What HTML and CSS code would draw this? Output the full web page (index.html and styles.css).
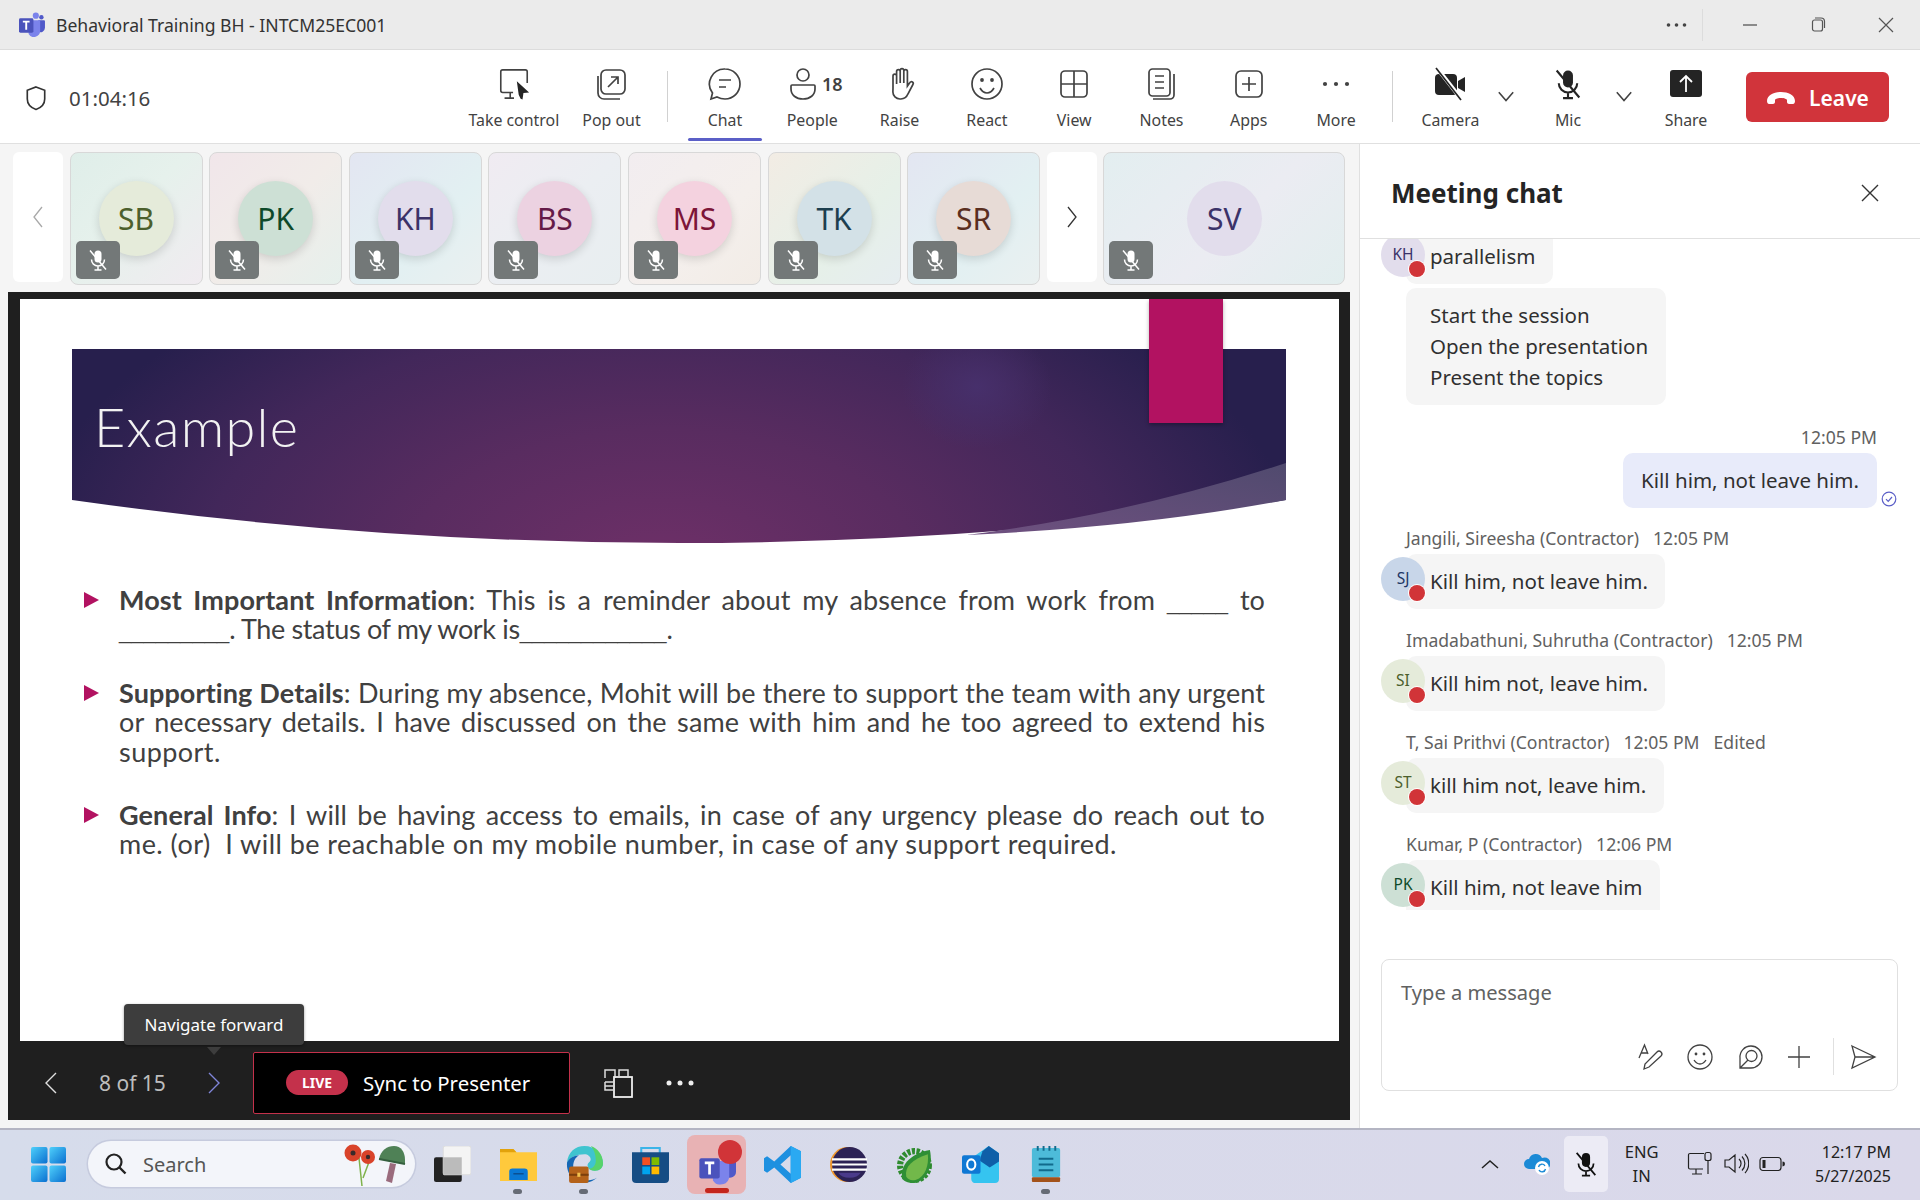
FILE: index.html
```html
<!DOCTYPE html>
<html lang="en">
<head>
    <meta charset="UTF-8">
    <title>Behavioral Training BH - INTCM25EC001</title>
    <link rel="stylesheet" href="styles.css">
</head>
<body>
<!-- Shared icons -->
<svg class="defs" width="0" height="0">
    <symbol id="mic-off" viewBox="0 0 24 24">
        <rect x="8.5" y="2.5" width="7" height="12" rx="3.5" fill="currentColor" stroke="none"/>
        <path d="M5.5 11.5a6.5 6.5 0 0 0 13 0M12 18v4M8.5 22h7M4 2.5l16 19" fill="none" stroke="currentColor" stroke-width="1.5"/>
    </symbol>
    <symbol id="teams" viewBox="0 0 28 26">
        <circle cx="18.5" cy="3.8" r="3.2" fill="#7b83eb"/>
        <circle cx="24.3" cy="5.5" r="2.3" fill="#5059c9"/>
        <path d="M21 8.5h6a1 1 0 0 1 1 1v7a4.5 4.5 0 0 1-7 3.7z" fill="#5059c9"/>
        <path d="M11 8.5h11a1 1 0 0 1 1 1v10a6.5 6.5 0 0 1-12 3.5z" fill="#7b83eb"/>
        <rect x="1" y="6.5" width="15" height="15" rx="1.5" fill="#4b53bc"/>
        <path d="M5 10h7M8.5 10v8.5" stroke="#fff" stroke-width="2" fill="none"/>
    </symbol>
</svg>

<div class="app">
    <!-- Title bar -->
    <header class="titlebar">
        <svg class="teams-logo"><use href="#teams"/></svg>
        <span class="title">Behavioral Training BH - INTCM25EC001</span>
        <div class="win-controls">
            <svg class="win-dots" viewBox="0 0 20 4"><circle cx="2" cy="2" r="1.8" fill="#444"/><circle cx="10" cy="2" r="1.8" fill="#444"/><circle cx="18" cy="2" r="1.8" fill="#444"/></svg>
            <span class="win-sep"></span>
            <svg class="win-btn" viewBox="0 0 20 20"><path d="M3 10h14" stroke="#555" stroke-width="1.3"/></svg>
            <svg class="win-btn" viewBox="0 0 20 20"><rect x="4.5" y="5" width="10" height="11" rx="2" fill="none" stroke="#555" stroke-width="1.2"/><path d="M7 3h6a3.5 3.5 0 0 1 3.5 3.5V13" fill="none" stroke="#555" stroke-width="1.2"/></svg>
            <svg class="win-btn" viewBox="0 0 20 20"><path d="M3 3l14 14M17 3L3 17" stroke="#555" stroke-width="1.2"/></svg>
        </div>
    </header>

    <!-- Meeting toolbar -->
    <nav class="toolbar">
        <div class="call-info">
            <svg class="shield" viewBox="0 0 24 28"><path d="M12 2l9.5 3.5V15c0 5.500-4 9.500-9.500 11.500C6.500 24.500 2.500 20.500 2.500 15V5.500z" fill="none" stroke="#333" stroke-width="1.8"/></svg>
            <span class="timer">01:04:16</span>
        </div>
        <div class="tools">
            <div class="tool wide">
                <svg class="tool-icon" viewBox="0 0 36 34"><path d="M17 26H6a2 2 0 0 1-2-2V4a2 2 0 0 1 2-2h24a2 2 0 0 1 2 2v12M14 26v6M8 32h10" fill="none" stroke="#424242" stroke-width="1.7"/><path d="M21 14l13 12-6 .5-1 7-2-1-2-4z" fill="#242424"/></svg>
                <span>Take control</span>
            </div>
            <div class="tool">
                <svg class="tool-icon" viewBox="0 0 34 34"><rect x="7" y="3" width="24" height="24" rx="5" fill="none" stroke="#424242" stroke-width="1.7"/><path d="M4 9v17a6 6 0 0 0 6 6h16M14 20l10-10M17 10h7v7" fill="none" stroke="#424242" stroke-width="1.7"/></svg>
                <span>Pop out</span>
            </div>
            <span class="tool-sep left-sep"></span>
            <div class="tool active">
                <svg class="tool-icon" viewBox="0 0 34 34"><path d="M17 2a15 15 0 0 1 0 30c-3 0-5.500-.7-8-2l-6 2 1.500-6A15 15 0 0 1 17 2zM11 13h12M11 20h7" fill="none" stroke="#424242" stroke-width="1.7"/></svg>
                <span>Chat</span>
            </div>
            <div class="tool">
                <div class="people-icon">
                    <svg class="tool-icon" viewBox="0 0 28 34"><circle cx="14" cy="8" r="6" fill="none" stroke="#424242" stroke-width="1.7"/><path d="M3 18h22a1 1 0 0 1 1 1v3c0 6-5 10-12 10S2 28 2 22v-3a1 1 0 0 1 1-1z" fill="none" stroke="#424242" stroke-width="1.7"/></svg>
                    <b>18</b>
                </div>
                <span>People</span>
            </div>
            <div class="tool">
                <svg class="tool-icon" viewBox="0 0 34 34"><path d="M10 21V9a1.800 1.800 0 0 1 3.600 0V4.500a1.800 1.800 0 0 1 3.600 0V3.500a1.800 1.800 0 0 1 3.600 0v1a1.800 1.800 0 0 1 3.600 0V19l2.500-3.500a1.800 1.800 0 0 1 3 2l-5 9.500a8 8 0 0 1-7 5h-1a7 7 0 0 1-7-7zM13.600 9v8M17.200 4.500V16M20.800 4.500V16" fill="none" stroke="#424242" stroke-width="1.7"/></svg>
                <span>Raise</span>
            </div>
            <div class="tool">
                <svg class="tool-icon" viewBox="0 0 34 34"><circle cx="17" cy="17" r="15" fill="none" stroke="#424242" stroke-width="1.7"/><circle cx="12" cy="13" r="1.9" fill="#424242"/><circle cx="22" cy="13" r="1.9" fill="#424242"/><path d="M10 21c2 3.500 4.500 5 7 5s5-1.500 7-5" fill="none" stroke="#424242" stroke-width="1.7"/></svg>
                <span>React</span>
            </div>
            <div class="tool">
                <svg class="tool-icon" viewBox="0 0 34 34"><rect x="4" y="4" width="26" height="26" rx="4" fill="none" stroke="#424242" stroke-width="1.7"/><path d="M17 4v26M4 17h26" stroke="#424242" stroke-width="1.7"/></svg>
                <span>View</span>
            </div>
            <div class="tool">
                <svg class="tool-icon" viewBox="0 0 34 34"><rect x="5" y="2" width="21" height="27" rx="3.5" fill="none" stroke="#424242" stroke-width="1.7"/><path d="M11 9h9M11 15h9M11 21h9M30 7v21a4 4 0 0 1-4 4H9" fill="none" stroke="#424242" stroke-width="1.7"/></svg>
                <span>Notes</span>
            </div>
            <div class="tool">
                <svg class="tool-icon" viewBox="0 0 34 34"><rect x="4" y="4" width="26" height="26" rx="5" fill="none" stroke="#424242" stroke-width="1.7"/><path d="M17 10v14M10 17h14" stroke="#424242" stroke-width="1.7"/></svg>
                <span>Apps</span>
            </div>
            <div class="tool">
                <svg class="tool-icon" viewBox="0 0 34 34"><circle cx="6" cy="17" r="2.1" fill="#424242"/><circle cx="17" cy="17" r="2.1" fill="#424242"/><circle cx="28" cy="17" r="2.1" fill="#424242"/></svg>
                <span>More</span>
            </div>
            <span class="tool-sep right-sep"></span>
            <div class="tool">
                <svg class="tool-icon" viewBox="0 0 34 34"><rect x="2" y="7" width="22" height="21" rx="4" fill="#242424"/><path d="M25 14l7-4v15l-7-4z" fill="#242424"/><path d="M4 1l25 32" stroke="#fff" stroke-width="4"/><path d="M3 1l25 32" stroke="#242424" stroke-width="1.7"/></svg>
                <span>Camera</span>
            </div>
            <svg class="caret" viewBox="0 0 16 10"><path d="M2 1l6 7 6-7" fill="none" stroke="#424242" stroke-width="1.3"/></svg>
            <div class="tool mic-tool">
                <svg class="tool-icon" viewBox="0 0 24 24"><use href="#mic-off"/></svg>
                <span>Mic</span>
            </div>
            <svg class="caret" viewBox="0 0 16 10"><path d="M2 1l6 7 6-7" fill="none" stroke="#424242" stroke-width="1.3"/></svg>
            <div class="tool share-tool">
                <svg class="tool-icon" viewBox="0 0 34 34"><rect x="1" y="3" width="32" height="27" rx="3" fill="#242424"/><path d="M17 25V9M11 15l6-6 6 6" fill="none" stroke="#fff" stroke-width="1.8"/></svg>
                <span>Share</span>
            </div>
            <button class="leave" type="button">
                <svg viewBox="0 0 30 16" class="leave-icon"><path d="M1 11c0-6 7-9 14-9s14 3 14 9c0 2-1 3-2 3h-4c-1 0-2-1-2-2v-2c0-1-3-2-6-2s-6 1-6 2v2c0 1-1 2-2 2H3c-1 0-2-1-2-3z" fill="#fff"/></svg>
                Leave
            </button>
        </div>
    </nav>

    <div class="main">
        <!-- Stage: participants and shared slide -->
        <section class="stage">
            <div class="strip">
                <div class="strip-nav prev"><svg viewBox="0 0 12 24"><path d="M10 2L2 12l8 10" fill="none" stroke="#a8a8a8" stroke-width="1.3"/></svg></div>
                <div class="tile t1"><span class="face sb">SB</span><span class="muted"><svg><use href="#mic-off"/></svg></span></div>
                <div class="tile t2"><span class="face pk">PK</span><span class="muted"><svg><use href="#mic-off"/></svg></span></div>
                <div class="tile t3"><span class="face kh">KH</span><span class="muted"><svg><use href="#mic-off"/></svg></span></div>
                <div class="tile t4"><span class="face bs">BS</span><span class="muted"><svg><use href="#mic-off"/></svg></span></div>
                <div class="tile t5"><span class="face ms">MS</span><span class="muted"><svg><use href="#mic-off"/></svg></span></div>
                <div class="tile t6"><span class="face tk">TK</span><span class="muted"><svg><use href="#mic-off"/></svg></span></div>
                <div class="tile t3"><span class="face sr">SR</span><span class="muted"><svg><use href="#mic-off"/></svg></span></div>
                <div class="strip-nav next"><svg viewBox="0 0 12 24"><path d="M2 2l8 10-8 10" fill="none" stroke="#333" stroke-width="1.3"/></svg></div>
                <div class="tile big t7"><span class="face sv">SV</span><span class="muted"><svg><use href="#mic-off"/></svg></span></div>
            </div>

            <div class="presentation">
                <div class="slide">
                    <div class="ribbon"></div>
                    <div class="banner">
                        <svg viewBox="0 0 1214 194" width="1214" height="194">
                            <defs>
                                <radialGradient id="bannerFill" gradientUnits="userSpaceOnUse" cx="590" cy="185" r="640" gradientTransform="translate(0 120) scale(1 .55)">
                                    <stop offset="0" stop-color="#6f3068"/>
                                    <stop offset=".4" stop-color="#592c60"/>
                                    <stop offset=".72" stop-color="#42275a"/>
                                    <stop offset="1" stop-color="#271f4d"/>
                                </radialGradient>
                                <radialGradient id="bannerGlow">
                                    <stop offset="0" stop-color="#47306c" stop-opacity=".95"/>
                                    <stop offset="1" stop-color="#47306c" stop-opacity="0"/>
                                </radialGradient>
                                <linearGradient id="swoosh" x1="0" y1="1" x2="1" y2="0">
                                    <stop offset="0" stop-color="#6f5080"/>
                                    <stop offset="1" stop-color="#504a6e"/>
                                </linearGradient>
                            </defs>
                            <path d="M0 0H1214V151Q607 237 0 151Z" fill="url(#bannerFill)"/>
                            <ellipse cx="905" cy="38" rx="75" ry="62" fill="url(#bannerGlow)"/>
                            <path d="M1214 114Q1060 165 895 186Q1070 178 1214 151Z" fill="url(#swoosh)"/>
                        </svg>
                        <h1 class="slide-title">Example</h1>
                    </div>
                    <div class="points">
                        <div class="point">
                            <span class="arrow"></span>
                            <div class="point-text">
                                <span class="just"><b>Most Important Information</b>: This is a reminder about my absence from work from <i class="blank">_____</i> to</span>
                                <span class="line tight"><i class="blank">_________</i>. The status of my work is<i class="blank">____________</i>.</span>
                            </div>
                        </div>
                        <div class="point">
                            <span class="arrow"></span>
                            <div class="point-text">
                                <span class="just"><b>Supporting Details</b>: During my absence, Mohit will be there to support the team with any urgent</span>
                                <span class="just">or necessary details. I have discussed on the same with him and he too agreed to extend his</span>
                                <span class="line">support.</span>
                            </div>
                        </div>
                        <div class="point">
                            <span class="arrow"></span>
                            <div class="point-text">
                                <span class="just"><b>General Info</b>: I will be having access to emails, in case of any urgency please do reach out to</span>
                                <span class="line">me. (or)&nbsp; I will be reachable on my mobile number, in case of any support required.</span>
                            </div>
                        </div>
                    </div>
                </div>
                <div class="slide-bar">
                    <div class="tooltip">Navigate forward</div>
                    <svg class="slide-chev" viewBox="0 0 14 24"><path d="M12 2L2 12l10 10" fill="none" stroke="#e0e0e0" stroke-width="1.4"/></svg>
                    <span class="page-count">8 of 15</span>
                    <svg class="slide-chev" viewBox="0 0 14 24"><path d="M2 2l10 10L2 22" fill="none" stroke="#7f85d8" stroke-width="1.4"/></svg>
                    <div class="sync">
                        <span class="live">LIVE</span>
                        <span>Sync to Presenter</span>
                    </div>
                    <svg class="thumbs" viewBox="0 0 30 30"><path d="M2 10V2h10v8M16 8V2h9v6M2 14h8M2 14v8h8M2 18h8" fill="none" stroke="#ddd" stroke-width="1.5"/><rect x="11" y="9" width="18" height="20" fill="none" stroke="#eee" stroke-width="1.8"/></svg>
                    <svg class="slide-more" viewBox="0 0 28 6"><circle cx="3" cy="3" r="2.5" fill="#eee"/><circle cx="14" cy="3" r="2.5" fill="#eee"/><circle cx="25" cy="3" r="2.5" fill="#eee"/></svg>
                </div>
            </div>
        </section>

        <!-- Meeting chat -->
        <aside class="chat">
            <div class="chat-head">
                <h2>Meeting chat</h2>
                <svg viewBox="0 0 20 20"><path d="M2 2l16 16M18 2L2 18" stroke="#333" stroke-width="1.4"/></svg>
            </div>
            <div class="messages">
                <div class="msg first">
                    <div class="bubble cut-top">
                        <span class="chat-av kh top"><i>KH</i><em class="dot"></em></span>
                        parallelism
                    </div>
                    <div class="bubble multi">Start the session<br>Open the presentation<br>Present the topics</div>
                </div>
                <div class="msg own">
                    <div class="meta">12:05 PM</div>
                    <div class="bubble mine">
                        Kill him, not leave him.
                        <svg class="seen" viewBox="0 0 16 16"><circle cx="8" cy="8" r="6.8" fill="none" stroke="#5b5fc7" stroke-width="1.2"/><path d="M5 8.200l2.200 2.200L11 6" fill="none" stroke="#5b5fc7" stroke-width="1.2"/></svg>
                    </div>
                </div>
                <div class="msg">
                    <div class="meta">Jangili, Sireesha (Contractor)<span>12:05 PM</span></div>
                    <div class="bubble"><span class="chat-av sj"><i>SJ</i><em class="dot"></em></span>Kill him, not leave him.</div>
                </div>
                <div class="msg">
                    <div class="meta">Imadabathuni, Suhrutha (Contractor)<span>12:05 PM</span></div>
                    <div class="bubble"><span class="chat-av si"><i>SI</i><em class="dot"></em></span>Kill him not, leave him.</div>
                </div>
                <div class="msg">
                    <div class="meta">T, Sai Prithvi (Contractor)<span>12:05 PM</span><span>Edited</span></div>
                    <div class="bubble"><span class="chat-av st"><i>ST</i><em class="dot"></em></span>kill him not, leave him.</div>
                </div>
                <div class="msg">
                    <div class="meta">Kumar, P (Contractor)<span>12:06 PM</span></div>
                    <div class="bubble"><span class="chat-av pk2"><i>PK</i><em class="dot"></em></span>Kill him, not leave him<br>kill him, not leave him</div>
                </div>
            </div>
            <div class="compose">
                <div class="placeholder">Type a message</div>
                <div class="compose-tools">
                    <svg viewBox="0 0 28 28"><path d="M2 15L7.500 2 11 11M4 10h6M12 24l-5 2 1-5L20 9a2.800 2.800 0 0 1 4 4z" fill="none" stroke="#424242" stroke-width="1.3"/></svg>
                    <svg viewBox="0 0 28 28"><circle cx="14" cy="14" r="12" fill="none" stroke="#424242" stroke-width="1.3"/><circle cx="10" cy="11" r="1.4" fill="#424242"/><circle cx="18" cy="11" r="1.4" fill="#424242"/><path d="M8 17c2 3 4 4 6 4s4-1 6-4" fill="none" stroke="#424242" stroke-width="1.3"/></svg>
                    <svg viewBox="0 0 28 28"><path d="M15 3a11 11 0 0 1 0 22H4V15A11 11 0 0 1 15 3zM4 25l8-8" fill="none" stroke="#424242" stroke-width="1.3"/><circle cx="15.500" cy="13" r="5.500" fill="none" stroke="#424242" stroke-width="1.3"/></svg>
                    <svg viewBox="0 0 28 28"><path d="M14 3v22M3 14h22" stroke="#424242" stroke-width="1.3"/></svg>
                    <span class="compose-sep"></span>
                    <svg viewBox="0 0 28 28"><path d="M3 3l23 11L3 25l3-11zM6 14h20" fill="none" stroke="#424242" stroke-width="1.3"/></svg>
                </div>
            </div>
        </aside>
    </div>

    <!-- Windows taskbar -->
    <footer class="taskbar">
        <svg class="start" viewBox="0 0 36 36">
            <defs><linearGradient id="winBlue" x1="0" y1="0" x2="1" y2="1"><stop offset="0" stop-color="#4fd0fb"/><stop offset="1" stop-color="#0a6fd0"/></linearGradient></defs>
            <rect width="17" height="17" x="0" y="0" rx="2" fill="url(#winBlue)"/><rect width="17" height="17" x="19" y="0" rx="2" fill="url(#winBlue)"/><rect width="17" height="17" x="0" y="19" rx="2" fill="url(#winBlue)"/><rect width="17" height="17" x="19" y="19" rx="2" fill="url(#winBlue)"/>
        </svg>
        <div class="search">
            <svg class="search-icon" viewBox="0 0 24 24"><circle cx="10" cy="10" r="7.500" fill="none" stroke="#222" stroke-width="2.2"/><path d="M15.500 15.500l6 6" stroke="#222" stroke-width="2.4"/></svg>
            <span class="search-text">Search</span>
            <svg class="poppy" viewBox="0 0 64 44">
                <path d="M17 16l3 28M27 20l-6 16" stroke="#7fb24c" stroke-width="1.5" fill="none"/>
                <circle cx="11" cy="11" r="8.500" fill="#d9432a"/><circle cx="11" cy="11" r="2.500" fill="#3a2a2a"/>
                <circle cx="26" cy="15" r="7" fill="#d9432a"/><circle cx="26" cy="15" r="2.200" fill="#3a2a2a"/>
                <path d="M37 17c2-9 8-13 15-13s11 6 11 14v4z" fill="#4f8156"/><path d="M37 17l26 5" stroke="#35603f" stroke-width="2"/>
                <path d="M48 21l-4 18 6 2 4-19z" fill="#9a6b7d"/>
            </svg>
        </div>
        <div class="apps">
            <span class="app-icon">
                <svg viewBox="0 0 36 36"><rect x="0" y="11" width="27" height="24" rx="2" fill="#222"/><rect x="9" y="0" width="27" height="28" rx="2" fill="#f4f4f4" stroke="#ddd"/><rect x="9" y="11" width="18" height="17" fill="#bbb"/></svg>
            </span>
            <span class="app-icon running">
                <svg viewBox="0 0 36 36"><path d="M0 3h13l3 3h20v28H0z" fill="#ffc93c"/><path d="M0 3h13l3 3H0z" fill="#e2a20c"/><path d="M9 33V25a3 3 0 0 1 3-3h12a3 3 0 0 1 3 3v8z" fill="#0a78d4"/><path d="M13 27h10" stroke="#0b4f92" stroke-width="1.5"/></svg>
            </span>
            <span class="app-icon running">
                <svg viewBox="0 0 36 36"><path d="M1 16C2 6 9 0 18 0c10 0 18 8 18 17 0 4-3 7-8 7-4 0-7-2-7-5 0-3 3-3 3-6 0-3-3-5-6-5C10 8 4 11 1 16z" fill="#3fc4cf"/><path d="M24 0c7 2 12 9 12 17 0 4-3 7-8 7-3 0-5-1-6-2 4 0 7-3 7-8 0-6-2-11-5-14z" fill="#58d36a"/><path d="M1 16c2-4 7-7 12-7-4 2-6 6-6 11 0 6 5 12 11 13 5 1 9 0 12-2-3 3-8 5-13 5C8 36 0 27 1 16z" fill="#1567b5"/><rect x="3" y="20" width="19" height="16" rx="2" fill="#b4621a"/><rect x="3" y="27" width="19" height="2" fill="#7c3f0c"/><rect x="11" y="26" width="3" height="4" fill="#f2c14e"/></svg>
            </span>
            <span class="app-icon">
                <svg viewBox="0 0 36 36"><path d="M9 8V2h18v6" fill="none" stroke="#3bb4e8" stroke-width="2"/><path d="M0 6h36v26a4 4 0 0 1-4 4H4a4 4 0 0 1-4-4z" fill="#164d84"/><rect x="10" y="11" width="7.500" height="7.500" fill="#f25022"/><rect x="19" y="11" width="7.500" height="7.500" fill="#7fba00"/><rect x="10" y="20" width="7.500" height="7.500" fill="#00a4ef"/><rect x="19" y="20" width="7.500" height="7.500" fill="#ffb900"/></svg>
            </span>
            <span class="app-icon teams-on">
                <svg class="teams-task" viewBox="0 0 28 26"><use href="#teams"/></svg>
                <em class="task-badge"></em>
                <em class="task-line"></em>
            </span>
            <span class="app-icon">
                <svg viewBox="0 0 36 36"><path d="M26 0l10 5v26l-10 5-16-15-7 5-3-2V12l3-2 7 5zM26 9l-10 9 10 9z" fill="#1e90e0"/><path d="M26 0l10 5v26l-10 5z" fill="#2aa9f2"/></svg>
            </span>
            <span class="app-icon">
                <svg viewBox="0 0 36 36"><circle cx="17" cy="18" r="17" fill="#f0972c"/><circle cx="19" cy="18" r="17" fill="#2c2255"/><path d="M2 13h34M2 18h34M2 23h34" stroke="#fff" stroke-width="2"/><path d="M8 26h22a12 8 0 0 1-22 0z" fill="#4a3a8a"/></svg>
            </span>
            <span class="app-icon">
                <svg viewBox="0 0 36 36"><circle cx="18" cy="19" r="14" fill="none" stroke="#2e8b2e" stroke-width="6" stroke-dasharray="3 1.5"/><path d="M6 32C4 20 12 8 33 4c3 14-2 30-15 32-5 0-9-1-12-4z" fill="#2f8f35"/><path d="M10 30C8 20 16 13 31 8c1 10-2 22-12 25-4 1-7 0-9-3z" fill="#72b84a"/></svg>
            </span>
            <span class="app-icon">
                <svg viewBox="0 0 36 36"><path d="M9 12L26 0l10 7v25a4 4 0 0 1-4 4H14a4 4 0 0 1-5-4z" fill="#35c4f0"/><path d="M20 5L26 0l10 7v8l-9 6-10-7z" fill="#0f5fa8"/><rect x="0" y="9" width="18" height="18" rx="2" fill="#0f78d4"/><ellipse cx="9" cy="18" rx="4" ry="5" fill="none" stroke="#fff" stroke-width="2"/></svg>
            </span>
            <span class="app-icon running">
                <svg viewBox="0 0 30 38"><rect y="2" width="29" height="30" rx="2" fill="#4dbbd9"/><rect y="32" width="29" height="5" rx="1" fill="#a3521a"/><path d="M6 0v5M12 0v5M18 0v5M24 0v5" stroke="#136b8c" stroke-width="2"/><path d="M7 13h15M7 19h15M7 25h15" stroke="#116a8c" stroke-width="2"/></svg>
            </span>
        </div>
        <div class="tray">
            <svg class="tray-chev" viewBox="0 0 18 10"><path d="M1 9l8-7 8 7" fill="none" stroke="#222" stroke-width="1.5"/></svg>
            <svg class="onedrive" viewBox="0 0 26 22"><path d="M5 16a5 5 0 0 1 0-10 7 7 0 0 1 13-1 6 6 0 0 1 5 11z" fill="#1c8ad6"/><circle cx="18" cy="15" r="7" fill="#fff"/><path d="M14.500 14a3.500 3.500 0 0 1 6.500-1M21.500 16a3.500 3.500 0 0 1-6.500 1" fill="none" stroke="#1c8ad6" stroke-width="1.4"/></svg>
            <span class="tray-mic"><svg><use href="#mic-off"/></svg></span>
            <div class="lang">ENG<br>IN</div>
            <svg class="tray-icon net" viewBox="0 0 26 26"><path d="M16 18H3a1.500 1.500 0 0 1-1.500-1.500V4A1.500 1.500 0 0 1 3 2.500h14M9 18v5M5 23h10" fill="none" stroke="#222" stroke-width="1.2"/><rect x="18" y="1.500" width="6" height="8" rx="2" fill="none" stroke="#222" stroke-width="1.2"/><path d="M21 9.500V23" stroke="#222" stroke-width="1.2"/></svg>
            <svg class="tray-icon vol" viewBox="0 0 26 26"><path d="M2 9v7h4l6 5V4L6 9zM16 8a6 6 0 0 1 0 9M19 5.500a10 10 0 0 1 0 14M22 3a14 14 0 0 1 0 19" fill="none" stroke="#222" stroke-width="1.2"/></svg>
            <svg class="tray-icon bat" viewBox="0 0 26 16"><rect x="1" y="1.500" width="21" height="13" rx="3" fill="none" stroke="#222" stroke-width="1.2"/><rect x="3.500" y="4" width="3" height="8" fill="#222"/><path d="M23.500 5.500v5a2.500 2.500 0 0 0 0-5z" fill="#222"/></svg>
            <div class="clock">12:17 PM<br>5/27/2025</div>
        </div>
    </footer>
</div>
</body>
</html>
```
FILE: styles.css
```css
/* General Reset */
* {
    box-sizing: border-box;
}

body {
    margin: 0;
    font-family: "Noto Sans", "Open Sans", sans-serif;
    color: #242424;
    background: #fff;
}

.defs {
    display: block;
    height: 0;
}

.app {
    display: flex;
    flex-direction: column;
    width: 1920px;
    height: 1200px;
    overflow: hidden;
}

/* Title bar */
.titlebar {
    display: flex;
    align-items: center;
    flex: 0 0 50px;
    padding-left: 18px;
    background: #ebebeb;
    border-bottom: 1px solid #dcdcdc;
}

.teams-logo {
    width: 27px;
    height: 25px;
    margin-right: 11px;
}

.title {
    font-size: 17.6px;
    color: #333;
}

.win-controls {
    display: flex;
    align-items: center;
    margin-left: auto;
    padding-right: 24px;
}

.win-dots {
    width: 21px;
    height: 4px;
    margin-right: 15px;
}

.win-sep {
    width: 1px;
    height: 32px;
    background: #dcdcdc;
    margin-right: 37px;
}

.win-btn {
    width: 20px;
    height: 20px;
    margin-right: 48px;
}

.win-btn:last-child {
    margin-right: 0;
}

/* Meeting toolbar */
.toolbar {
    display: flex;
    align-items: stretch;
    flex: 0 0 94px;
    padding: 0 31px 0 25px;
    background: #fff;
    border-bottom: 1px solid #e0e0e0;
}

.call-info {
    display: flex;
    align-items: center;
    gap: 22px;
    padding-top: 2px;
}

.shield {
    width: 22px;
    height: 26px;
}

.timer {
    font-size: 20.5px;
    color: #424242;
}

.tools {
    display: flex;
    align-items: stretch;
    margin-left: auto;
}

.tool {
    position: relative;
    display: flex;
    flex-direction: column;
    align-items: center;
    width: 87.3px;
    padding-top: 17px;
    font-size: 15.9px;
    color: #424242;
}

.tool span {
    margin-top: 8px;
    line-height: 22px;
}

.tool.wide {
    width: 106px;
    margin-right: 1px;
}

.tool-icon {
    width: 34px;
    height: 34px;
    flex: none;
    color: #242424;
}

.tool.active::after {
    content: "";
    position: absolute;
    left: 7px;
    right: 7px;
    bottom: 2px;
    height: 3px;
    border-radius: 2px;
    background: #5b5fc7;
}

.people-icon {
    display: flex;
    align-items: center;
    margin-left: 7px;
}

.people-icon .tool-icon {
    width: 28px;
}

.people-icon b {
    font-size: 18px;
    font-weight: 600;
    margin-left: 5px;
}

.tool-sep {
    width: 1px;
    height: 51px;
    margin-top: 21px;
    background: #d1d1d1;
}

.left-sep {
    margin-left: 11.8px;
    margin-right: 13.4px;
}

.right-sep {
    margin-left: 12px;
    margin-right: 14px;
}

.caret {
    width: 24px;
    height: 12px;
    margin-top: 41px;
}

.mic-tool {
    margin-left: 6px;
    width: 88px;
}

.share-tool {
    margin-left: 6px;
    width: 88px;
}

.leave {
    display: flex;
    align-items: center;
    justify-content: center;
    gap: 13px;
    align-self: flex-start;
    width: 143px;
    height: 50px;
    margin: 22px 0 0 16px;
    padding: 2px 0 0;
    border: none;
    border-radius: 6px;
    background: #d1343b;
    color: #fff;
    font-family: inherit;
    font-size: 21px;
    font-weight: 600;
}

.leave-icon {
    width: 30px;
    height: 16px;
}

/* Main area */
.main {
    display: flex;
    flex: 1;
    min-height: 0;
}

.stage {
    flex: 0 0 1359px;
    padding: 8px 9px 9px 8px;
    background: #f5f5f5;
}

.strip {
    display: flex;
    gap: 6.6px;
    height: 133px;
    margin-bottom: 7px;
}

.strip-nav {
    display: flex;
    align-items: center;
    justify-content: center;
    width: 50px;
    margin: 0 0 3px 5px;
    background: #fff;
    border-radius: 6px;
}

.strip-nav svg {
    width: 12px;
    height: 24px;
}

.strip-nav.next {
    margin: 0 0 3px 0;
}

.tile {
    position: relative;
    display: flex;
    align-items: center;
    justify-content: center;
    width: 133px;
    border: 1px solid #d8d8d8;
    border-radius: 8px;
}

.tile.big {
    width: 242px;
}

.t1 { background: linear-gradient(135deg, #dfeee9, #e6f1ec 45%, #f0ebf0); }
.t2 { background: linear-gradient(135deg, #f1e6ea, #f1ece9 50%, #e6f0ec); }
.t3 { background: linear-gradient(135deg, #e3e6f2, #e2f0f2 60%, #eaf0f0); }
.t4 { background: linear-gradient(135deg, #f0ebf2, #ebeef2 50%, #e8eef0); }
.t5 { background: linear-gradient(135deg, #f2edf0, #f4efec 60%, #f2ece6); }
.t6 { background: linear-gradient(135deg, #f2ece4, #e6f0e8 60%, #e6edf0); }
.t7 { background: linear-gradient(135deg, #e3eef0, #ebecf2 55%, #e2eeee); }

.face {
    display: flex;
    align-items: center;
    justify-content: center;
    width: 75px;
    height: 75px;
    margin-top: -1px;
    border-radius: 50%;
    font-size: 30px;
    box-shadow: 0 3px 10px rgba(0, 0, 0, 0.14);
}

.sb { background: #e5ebda; color: #4c5f2c; }
.pk { background: #cde0d5; color: #0e4a2a; }
.kh { background: #e2ddec; color: #3b3268; }
.bs { background: #ecd2e1; color: #651a48; }
.ms { background: #f4d2df; color: #7d1538; }
.tk { background: #d3e1e7; color: #1d3f4f; }
.sr { background: #e7dbd6; color: #5a2e1f; }
.sv { background: #e2ddec; color: #3b3268; box-shadow: none; }

.muted {
    position: absolute;
    left: 5px;
    bottom: 5px;
    display: flex;
    align-items: center;
    justify-content: center;
    width: 44px;
    height: 38px;
    border-radius: 5px;
    background: #737878;
    color: #fff;
}

.muted svg {
    width: 24px;
    height: 28px;
}

/* Shared slide */
.presentation {
    display: flex;
    flex-direction: column;
    height: 828px;
    padding: 7px 11px 0 12px;
    background: #1f1f1f;
}

.slide {
    position: relative;
    flex: 0 0 742px;
    padding: 50px 0 0 52px;
    background: #fff;
    font-family: "Lato", sans-serif;
    color: #404040;
}

.ribbon {
    position: absolute;
    top: 0;
    left: 1129px;
    width: 74px;
    height: 124px;
    background: #b21261;
    box-shadow: 0 2px 4px rgba(0, 0, 0, 0.3);
    z-index: 1;
}

.banner {
    position: relative;
    width: 1214px;
    height: 194px;
}

.banner svg {
    display: block;
}

.slide-title {
    position: absolute;
    left: 22px;
    top: 45px;
    margin: 0;
    font-size: 54px;
    font-weight: 300;
    letter-spacing: 1.3px;
    color: #f2f2f2;
}

.points {
    margin: 42px 74px 0 12px;
}

.point {
    display: flex;
    gap: 20px;
    margin-bottom: 34px;
}

.arrow {
    flex: none;
    width: 0;
    height: 0;
    margin-top: 7px;
    border-left: 15px solid #b21261;
    border-top: 8px solid transparent;
    border-bottom: 8px solid transparent;
}

.point-text {
    flex: 1;
    font-size: 27px;
    line-height: 29.4px;
    letter-spacing: 0.45px;
}

.point-text b {
    font-weight: 700;
}

.blank {
    font-family: "Liberation Sans", sans-serif;
    font-size: 22px;
    font-style: normal;
    line-height: 0;
    letter-spacing: 0;
}

.just,
.line {
    display: block;
    white-space: nowrap;
}

.line.tight {
    letter-spacing: -0.35px;
}

.just {
    letter-spacing: 0.1px;
    text-align: justify;
    text-align-last: justify;
    white-space: normal;
}

.slide-bar {
    position: relative;
    display: flex;
    align-items: center;
    flex: 1;
    padding: 4px 0 0 24px;
}

.tooltip {
    position: absolute;
    left: 104px;
    top: -37px;
    width: 180px;
    height: 41px;
    border-radius: 4px;
    background: #3d3d3d;
    color: #fff;
    font-size: 17px;
    line-height: 41px;
    text-align: center;
    box-shadow: 0 1px 3px rgba(0, 0, 0, 0.4);
    z-index: 2;
}

.tooltip::after {
    content: "";
    position: absolute;
    left: 83px;
    top: 43px;
    border-left: 7px solid transparent;
    border-right: 7px solid transparent;
    border-top: 8px solid #3d3d3d;
}

.slide-chev {
    width: 14px;
    height: 24px;
    flex: none;
}

.page-count {
    width: 149px;
    padding-left: 41px;
    font-size: 21px;
    color: #bdbdbd;
    white-space: nowrap;
}

.sync {
    display: flex;
    align-items: center;
    gap: 15px;
    width: 317px;
    height: 62px;
    margin-left: 32px;
    padding-left: 32px;
    background: #000;
    border: 1px solid #c4314b;
    border-radius: 2px;
    color: #fff;
    font-size: 20.4px;
}

.live {
    width: 62px;
    height: 25px;
    border-radius: 13px;
    background: #c4314b;
    font-size: 14px;
    font-weight: 700;
    line-height: 25px;
    text-align: center;
}

.thumbs {
    width: 30px;
    height: 30px;
    margin-left: 33px;
}

.slide-more {
    width: 28px;
    height: 6px;
    margin-left: 33px;
}

/* Chat panel */
.chat {
    display: flex;
    flex-direction: column;
    flex: 1;
    background: #fff;
    border-left: 1px solid #e0e0e0;
}

.chat-head {
    display: flex;
    align-items: center;
    justify-content: space-between;
    flex: 0 0 95px;
    padding: 4px 40px 0 31px;
    border-bottom: 1px solid #e0e0e0;
}

.chat-head h2 {
    margin: 0;
    font-size: 26px;
    font-weight: 700;
}

.chat-head svg {
    width: 20px;
    height: 20px;
}

.messages {
    flex: 0 0 671px;
    padding-left: 46px;
    overflow: hidden;
    font-size: 20.5px;
}

.msg {
    margin-top: 20px;
}

.msg.first {
    margin-top: 0;
}

.msg.own {
    margin-top: 21px;
    margin-bottom: -1px;
    padding-right: 43px;
    text-align: right;
}

.meta {
    font-size: 17.6px;
    line-height: 22px;
    margin-bottom: 5px;
    color: #616161;
}

.meta span {
    margin-left: 14px;
}

.bubble {
    position: relative;
    width: fit-content;
    padding: 12px 17.5px 12px 24px;
    border-radius: 10px;
    background: #f5f5f5;
    line-height: 31px;
    color: #303030;
}

.cut-top {
    height: 45px;
    padding: 2px 17.5px 0 24px;
    border-radius: 0 0 10px 10px;
    margin-bottom: 4px;
}

.mine {
    margin-left: auto;
    padding: 12px 18px 12px 18px;
    background: #e8ebfa;
}

.seen {
    position: absolute;
    right: -20px;
    bottom: 1px;
    width: 16px;
    height: 16px;
}

.chat-av {
    position: absolute;
    left: -25px;
    top: 3px;
    display: flex;
    justify-content: center;
    width: 44px;
    height: 44px;
    border-radius: 50%;
    font-size: 15.5px;
    line-height: 42px;
}

.chat-av.top {
    top: -6px;
}

.chat-av i {
    font-style: normal;
}

.dot {
    position: absolute;
    right: 0;
    bottom: 0;
    width: 16px;
    height: 16px;
    border-radius: 50%;
    background: #d13438;
    box-shadow: 0 0 0 1px #fff;
}

.sj { background: #c8d6e9; color: #1e3766; }
.si { background: #e5ebda; color: #4c5f2c; }
.st { background: #e5ebda; color: #4c5f2c; }
.pk2 { background: #cde0d5; color: #0e4a2a; }

.compose {
    display: flex;
    flex-direction: column;
    justify-content: space-between;
    height: 132px;
    margin: 49px 22px 0 21px;
    padding: 20px 20px 15px 19px;
    border: 1px solid #e0e0e0;
    border-radius: 8px;
}

.placeholder {
    font-size: 20.1px;
    line-height: 26px;
    color: #616161;
}

.compose-tools {
    display: flex;
    align-items: center;
    justify-content: flex-end;
    gap: 21.5px;
}

.compose-tools svg {
    width: 28px;
    height: 28px;
}

.compose-sep {
    width: 1px;
    height: 37px;
    margin: 0 -6px 0 -2px;
    background: #e0e0e0;
}

/* Taskbar */
.taskbar {
    display: flex;
    align-items: center;
    flex: 0 0 72px;
    padding: 0 29px 2px 31px;
    background: linear-gradient(90deg, #d6dceb, #dad8ea);
    border-top: 2px solid #b4b5c3;
}

.start {
    width: 35px;
    height: 35px;
}

.search {
    display: flex;
    align-items: center;
    width: 327px;
    height: 46px;
    margin-left: 22px;
    padding: 0 9px 0 16px;
    border-radius: 23px;
    background: #f3f5fa;
    box-shadow: 0 0 0 1.5px #c6cbde;
}

.search-icon {
    width: 24px;
    height: 24px;
}

.search-text {
    margin-left: 15px;
    font-size: 20px;
    color: #555;
}

.poppy {
    width: 64px;
    height: 44px;
    margin-left: auto;
}

.apps {
    display: flex;
    align-items: center;
    gap: 29px;
    margin-left: 19px;
}

.app-icon {
    position: relative;
    display: flex;
    width: 37px;
}

.app-icon svg {
    width: 37px;
    height: 37px;
}

.app-icon.running::after {
    content: "";
    position: absolute;
    left: 13px;
    bottom: -11px;
    width: 9px;
    height: 5px;
    border-radius: 3px;
    background: #666b75;
}

.teams-on {
    justify-content: center;
    width: 59px;
    height: 59px;
    margin: 0 -11px;
    padding-top: 14px;
    border-radius: 8px;
    background: #e8b2b4;
}

.teams-on svg {
    width: 38px;
    height: 36px;
}

.task-badge {
    position: absolute;
    top: 5px;
    right: 4px;
    width: 24px;
    height: 24px;
    border-radius: 50%;
    background: #d13438;
}

.task-line {
    position: absolute;
    left: 18px;
    bottom: 1px;
    width: 24px;
    height: 5px;
    border-radius: 3px;
    background: #c4261d;
}

.tray {
    display: flex;
    align-items: center;
    margin-left: auto;
    color: #222;
}

.tray-chev {
    width: 18px;
    height: 10px;
}

.onedrive {
    width: 26px;
    height: 22px;
    margin-left: 25px;
}

.tray-mic {
    display: flex;
    align-items: center;
    justify-content: center;
    width: 44px;
    height: 56px;
    margin-left: 14.2px;
    border-radius: 5px;
    background: #ecebf5;
    color: #111;
}

.tray-mic svg {
    width: 28px;
    height: 30px;
}

.lang {
    width: 50px;
    margin-left: 8.8px;
    font-size: 16.5px;
    line-height: 24px;
    text-align: center;
}

.tray-icon {
    height: 26px;
    width: 26px;
}

.net {
    margin-left: 20.4px;
}

.vol {
    margin-left: 9.8px;
}

.bat {
    margin-left: 9.8px;
    height: 16px;
}

.clock {
    margin-left: 30.4px;
    font-size: 16px;
    line-height: 24px;
    text-align: right;
}
```
